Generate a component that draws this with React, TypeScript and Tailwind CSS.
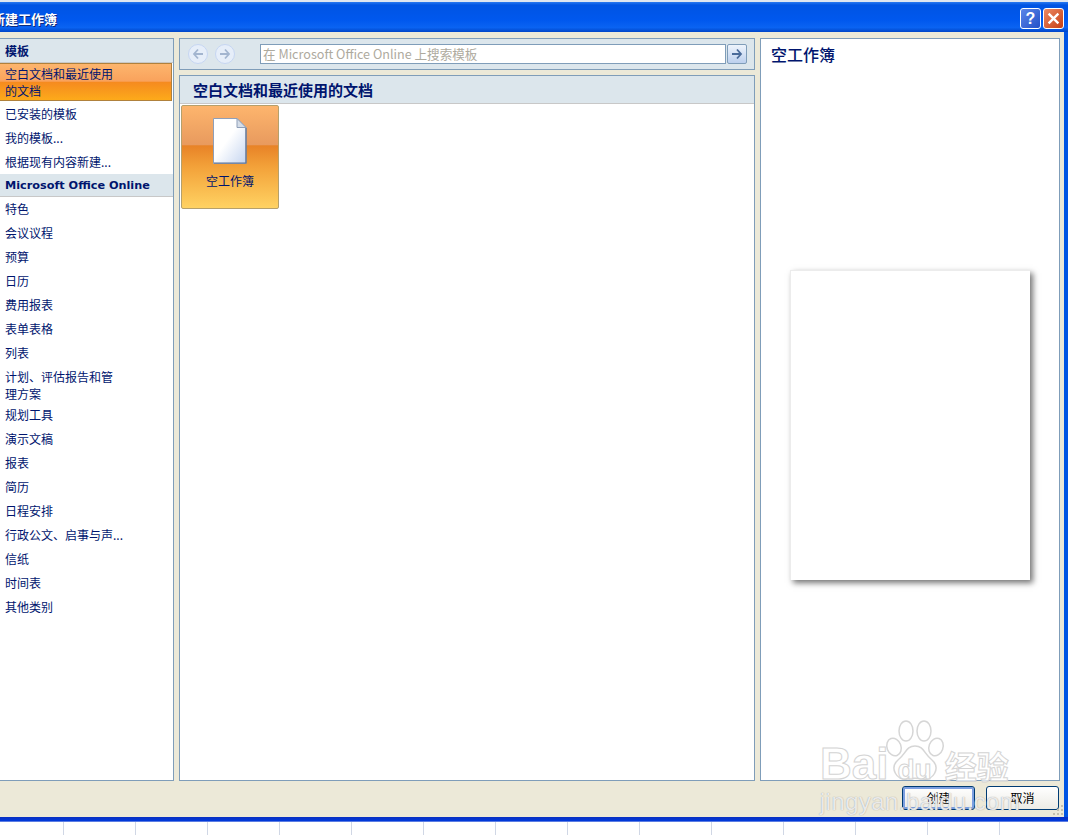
import React from 'react';

const gridLines = [63, 135, 207, 279, 351, 423, 495, 567, 639, 711, 783, 855, 927, 999];

// Left navigation rows (each is a flat 24px line unless it wraps)
const installedRows = ['已安装的模板', '我的模板...', '根据现有内容新建...'];
const onlineRows = ['特色', '会议议程', '预算', '日历', '费用报表', '表单表格', '列表'];
const onlineRowsAfter = ['规划工具', '演示文稿', '报表', '简历', '日程安排', '行政公文、启事与声...', '信纸', '时间表', '其他类别'];

const NavRow = ({ label }: { label: string }) => (
  <div className="h-6 pl-[5px] flex items-center text-[12px] leading-none text-[#00156e] whitespace-nowrap">{label}</div>
);

const RoundNav = ({ flip }: { flip?: boolean }) => (
  <div className="w-[20px] h-[20px] rounded-full border border-[#c6d6f2] bg-[#e6eef9] flex items-center justify-center">
    <svg width="12" height="12" viewBox="0 0 12 12" className={flip ? 'rotate-180' : ''}>
      <path d="M6 1.5 L2 6 L6 10.5 M2.5 6 H11" fill="none" stroke="#a3b5cf" strokeWidth="1.8" />
    </svg>
  </div>
);

const DocIcon = () => (
  <svg width="34" height="46" viewBox="0 0 34 46">
    <defs>
      <linearGradient id="page" x1="0" y1="0" x2="1" y2="1">
        <stop offset="0.45" stopColor="#ffffff" />
        <stop offset="1" stopColor="#c5d5f0" />
      </linearGradient>
    </defs>
    <path d="M0.5 0.5 H24 L33 9.5 V45.5 H0.5 Z" fill="url(#page)" stroke="#8f9fb8" />
    <path d="M1 45 H33 V10" fill="none" stroke="#5d7396" strokeWidth="1.2" />
    <path d="M24 0.5 V9.5 H33 Z" fill="#d5dde8" stroke="#8f9fb8" />
  </svg>
);

const Paw = () => (
  <svg width="60" height="62" viewBox="0 0 60 62" className="absolute left-[65px] top-0">
    <g fill="#ffffff" fillOpacity="0.5" stroke="#d6d6d6" strokeWidth="1.5">
      <ellipse cx="9" cy="27" rx="7" ry="9" transform="rotate(-20 9 27)" />
      <ellipse cx="21" cy="11" rx="7" ry="10" />
      <ellipse cx="39" cy="11" rx="7" ry="10" />
      <ellipse cx="51" cy="27" rx="7" ry="9" transform="rotate(20 51 27)" />
      <path d="M30 26 C39 26 39 34 47 40 C56 48 48 61 38 59 C33 58 27 58 22 59 C12 61 4 48 13 40 C21 34 21 26 30 26 Z" />
    </g>
  </svg>
);

const Watermark = () => (
  <div className="absolute left-[820px] top-[720px] w-[220px] h-[100px] pointer-events-none">
    <Paw />
    <div className="absolute left-0 top-[22px] flex items-baseline text-[44px] leading-none font-['Liberation_Sans',sans-serif] font-bold text-white/70 [-webkit-text-stroke:1px_#d4d4d4] whitespace-nowrap">
      <span>Bai</span>
      <span className="ml-[9px] text-[28px]">du</span>
      <span className="ml-[13px] text-[32px] font-['Noto_Sans_CJK_SC',sans-serif]">经验</span>
    </div>
    <div className="absolute left-0 top-[70px] text-[24px] leading-none tracking-[0.4px] font-['Liberation_Sans',sans-serif] text-white/80 [text-shadow:0_0_1px_#8a8a8a] whitespace-nowrap">
      jingyan.baidu.com
    </div>
  </div>
);

export default function App() {
  return (
    <div className="relative w-[1068px] h-[835px] overflow-hidden bg-white flex flex-col font-['Noto_Sans_CJK_SC','Noto_Sans',sans-serif]">
      {/* Window behind, a sliver on top */}
      <div className="h-[2px] bg-[#dfe6f0] shrink-0" />

      {/* Title bar */}
      <div className="h-[30px] shrink-0 pt-[3px] bg-[linear-gradient(180deg,#2a7af0_0%,#0054e3_10%,#0058ee_60%,#0a63f2_85%,#0046c8_100%)] flex items-center justify-between pr-[4px]">
        <span className="ml-[-8px] text-[13px] font-bold text-white [text-shadow:1px_1px_0_#0a2a80]">新建工作簿</span>
        <div className="flex gap-[2px]">
          <div className="w-[21px] h-[21px] rounded-[3px] border border-white bg-[linear-gradient(135deg,#5b86e8,#2350c8)] flex items-center justify-center text-white text-[16px] font-bold leading-none font-['Liberation_Sans',sans-serif]">?</div>
          <div className="w-[21px] h-[21px] rounded-[3px] border border-white bg-[linear-gradient(135deg,#ec8a64,#c73f14)] flex items-center justify-center">
            <svg width="13" height="13" viewBox="0 0 12 12"><path d="M1.5 1.5 L10.5 10.5 M10.5 1.5 L1.5 10.5" stroke="#fff" strokeWidth="2.2" /></svg>
          </div>
        </div>
      </div>

      {/* Dialog body */}
      <div className="flex-1 min-h-0 bg-[#ece9d8] border-r-[4px] border-[#0054e3] flex flex-col relative">
        <div className="h-[749px] shrink-0 pt-[6px] flex">
          {/* Left categories */}
          <div className="w-[174px] shrink-0 bg-white border-r border-t border-b border-[#7f9db9] flex flex-col">
            <div className="h-[24px] shrink-0 bg-[#dce6ec] border-b border-[#c8c8c8] pl-[5px] flex items-center text-[12px] font-bold text-[#00156e] leading-none">模板</div>
            <div className="h-[38px] shrink-0 pl-[5px] pt-[1px] text-[12px] leading-[17px] text-[#00156e] border border-[#b0813c] bg-[linear-gradient(180deg,#fdb56d_0%,#f9a25c_48%,#f58a1f_50%,#fdaa1a_100%)] ml-[-1px] mr-[1px]">
              空白文档和最近使用<br />的文档
            </div>
            <div className="pt-[1px]">
              {installedRows.map((r) => <NavRow key={r} label={r} />)}
            </div>
            <div className="h-[23px] shrink-0 pt-[1px] bg-[#dce6ec] border-b border-[#c8c8c8] pl-[5px] flex items-center text-[11.25px] font-bold text-[#00156e] leading-none whitespace-nowrap font-['DejaVu_Sans',sans-serif]">Microsoft Office Online</div>
            <div>
              {onlineRows.map((r) => <NavRow key={r} label={r} />)}
              <div className="h-[38px] pl-[5px] pt-[3px] text-[12px] leading-[17px] text-[#00156e]">计划、评估报告和管<br />理方案</div>
              {onlineRowsAfter.map((r) => <NavRow key={r} label={r} />)}
            </div>
          </div>

          {/* Middle column */}
          <div className="w-[576px] shrink-0 ml-[5px] flex flex-col gap-[5px]">
            <div className="h-[32px] shrink-0 bg-[#dce6ec] border border-[#7f9db9] flex items-center pl-[8px]">
              <RoundNav />
              <div className="ml-[7px]"><RoundNav flip /></div>
              <div className="ml-[25px] w-[466px] h-[20px] bg-white border border-[#7f9db9] pl-[2px] flex items-center text-[12.6px] leading-none text-[#aeaa9e] whitespace-nowrap">在 Microsoft Office Online 上搜索模板</div>
              <div className="ml-[1px] w-[20px] h-[20px] rounded-[2px] border border-[#7f9db9] bg-[linear-gradient(180deg,#eef4fc,#bcd0ee)] flex items-center justify-center">
                <svg width="12" height="12" viewBox="0 0 12 12"><path d="M6 1.5 L10 6 L6 10.5 M9.5 6 H1" fill="none" stroke="#4a6b9a" strokeWidth="1.8" /></svg>
              </div>
            </div>
            <div className="flex-1 min-h-0 bg-white border border-[#7f9db9] flex flex-col">
              <div className="h-[28px] shrink-0 bg-[#dce6ec] border-b border-[#c8c8c8] pl-[13px] flex items-center text-[15px] font-bold text-[#00156e] leading-none">空白文档和最近使用的文档</div>
              <div className="pl-[1px] pt-[1px]">
                <div className="w-[98px] h-[104px] rounded-[2px] border border-[#b5a06c] bg-[linear-gradient(180deg,#fdb56d_0%,#e89a5e_38%,#e88327_39%,#f3a23a_60%,#ffd262_100%)] flex flex-col items-center pt-[12px]">
                  <DocIcon />
                  <span className="mt-[11px] text-[12px] leading-none text-[#00156e]">空工作簿</span>
                </div>
              </div>
            </div>
          </div>

          {/* Preview */}
          <div className="w-[300px] shrink-0 ml-[5px] bg-white border border-[#7f9db9] flex flex-col">
            <div className="pl-[10px] pt-[5px] text-[16px] leading-[20px] font-medium text-[#00156e]">空工作簿</div>
            <div className="flex-1 flex items-center justify-center pt-[5px]">
              <div className="w-[240px] h-[310px] bg-white border-l border-t border-[#ececec] shadow-[3px_3px_6px_rgba(0,0,0,0.55)]" />
            </div>
          </div>
        </div>

        {/* Buttons */}
        <div className="flex-1 flex justify-end items-center gap-[11px] pr-[5px] pb-[2px]">
          <button className="w-[73px] h-[24px] rounded-[3px] border border-[#003c74] shadow-[inset_0_0_0_2px_#7c9fe0] bg-[linear-gradient(180deg,#ffffff,#ecebe5)] text-[12px] leading-none text-black">创建</button>
          <button className="w-[73px] h-[24px] rounded-[3px] border border-[#003c74] bg-[linear-gradient(180deg,#ffffff,#ecebe5)] text-[12px] leading-none text-black">取消</button>
        </div>

        {/* Resize grip */}
        <svg width="11" height="11" viewBox="0 0 11 11" className="absolute right-0 bottom-[1px]">
          <g fill="#c4c0ae">
            <rect x="8" y="0" width="2" height="2" />
            <rect x="4" y="4" width="2" height="2" />
            <rect x="8" y="4" width="2" height="2" />
            <rect x="0" y="8" width="2" height="2" />
            <rect x="4" y="8" width="2" height="2" />
            <rect x="8" y="8" width="2" height="2" />
          </g>
        </svg>
      </div>

      {/* Window edge and sheet behind */}
      <div className="h-[5px] shrink-0 bg-[linear-gradient(180deg,#0a2fc0,#0038d8_70%,#8aa0e8)]" />
      <div className="h-[13px] shrink-0 bg-white flex relative">
        {gridLines.map((x) => (
          <div key={x} className="absolute top-0 bottom-0 w-px bg-[#d0d7e5]" style={{ left: x }} />
        ))}
      </div>

      <Watermark />
    </div>
  );
}
